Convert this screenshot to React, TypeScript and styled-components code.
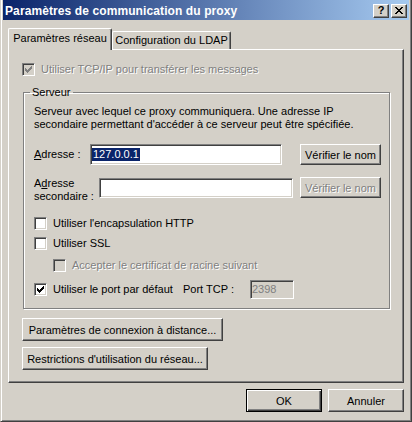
import styled, { createGlobalStyle } from 'styled-components'

const GlobalStyle = createGlobalStyle`
  html, body {
    margin: 0;
    padding: 0;
    background: #d4d0c8;
    overflow: hidden;
  }
  body {
    font-family: "Liberation Sans", Arial, sans-serif;
    font-size: 11px;
    color: #000;
  }
`

const Window = styled.div`
  box-sizing: border-box;
  width: 412px;
  height: 422px;
  background: #d4d0c8;
  border-left: 1px solid #d4d0c8;
  border-right: 1px solid #404040;
  border-bottom: 1px solid #404040;
  box-shadow: inset 1px 0 #fff, inset -1px -1px #808080;
  padding: 0 2px 2px 2px;
  display: flex;
  flex-direction: column;
`

const TitleBar = styled.div`
  height: 20px;
  display: flex;
  align-items: center;
  background: linear-gradient(to right, #0a246a, #a6caf0);
  padding: 1px 2px 0 2px;
  box-sizing: border-box;
`

const Title = styled.span`
  flex: 1;
  color: #fff;
  font-weight: bold;
  font-size: 12px;
  letter-spacing: 0.1px;
  white-space: nowrap;
`

const CaptionButton = styled.div`
  box-sizing: border-box;
  width: 16px;
  height: 14px;
  margin-left: 2px;
  background: #d4d0c8;
  border: 1px solid;
  border-color: #fff #404040 #404040 #fff;
  box-shadow: inset -1px -1px #808080;
  display: flex;
  align-items: center;
  justify-content: center;
  font-weight: bold;
  font-size: 11px;
  line-height: 11px;
`

const Body = styled.div`
  padding: 8px 5px 0 5px;
  display: flex;
  flex-direction: column;
`

const TabStrip = styled.div`
  display: flex;
  align-items: flex-end;
  height: 21px;
`

const Tab = styled.div<{ $active?: boolean; $w: number }>`
  box-sizing: border-box;
  width: ${p => p.$w}px;
  height: ${p => (p.$active ? 22 : 18)}px;
  margin-bottom: ${p => (p.$active ? -1 : 0)}px;
  position: relative;
  z-index: ${p => (p.$active ? 1 : 0)};
  background: #d4d0c8;
  border-top: 1px solid #fff;
  border-left: 1px solid #fff;
  border-right: 1px solid #404040;
  border-top-left-radius: 2px;
  border-top-right-radius: 2px;
  box-shadow: inset -1px 0 #808080;
  display: flex;
  justify-content: center;
  padding-top: ${p => (p.$active ? 3 : 2)}px;
  line-height: 13px;
`

const Panel = styled.div`
  box-sizing: border-box;
  height: 334px;
  border-top: 1px solid #fff;
  border-left: 1px solid #fff;
  border-right: 1px solid #404040;
  border-bottom: 1px solid #404040;
  box-shadow: inset -1px -1px #808080;
  padding: 13px 13px 0 13px;
  display: flex;
  flex-direction: column;
`

const Group = styled.fieldset`
  margin: 10px 0 0 1px;
  width: 367px;
  box-sizing: border-box;
  border: 1px solid #808080;
  box-shadow: 1px 1px #fff, inset 1px 1px #fff;
  padding: 6px 8px 9px 10px;
  min-width: 0;
  display: flex;
  flex-direction: column;
`

const Legend = styled.legend`
  padding: 0 2px;
  margin-left: -4px;
  line-height: 13px;
`

const Text = styled.div`
  line-height: 13px;
  white-space: nowrap;
`

const Row = styled.div<{ $mt: number; $align?: string }>`
  display: flex;
  align-items: ${p => p.$align || 'center'};
  margin-top: ${p => p.$mt}px;
`

const Label = styled.div<{ $w: number }>`
  width: ${p => p.$w}px;
  flex: none;
  line-height: 13px;
`

const Field = styled.div<{ $w: number; $h?: number; $disabled?: boolean; $mt?: number }>`
  box-sizing: border-box;
  width: ${p => p.$w}px;
  height: ${p => p.$h || 21}px;
  margin-top: ${p => p.$mt || 0}px;
  flex: none;
  background: ${p => (p.$disabled ? '#d4d0c8' : '#fff')};
  color: ${p => (p.$disabled ? '#808080' : '#000')};
  border: 1px solid;
  border-color: #808080 #fff #fff #808080;
  box-shadow: inset 1px 1px #404040, inset -1px -1px #d4d0c8;
  padding: 0 1px;
  display: flex;
  align-items: center;
  line-height: 13px;
`

const Selected = styled.span`
  background: #0a246a;
  color: #fff;
  padding: 0 1px 0 1px;
`

const Button = styled.button<{ $w: number; $h?: number; $mt?: number; $default?: boolean }>`
  box-sizing: border-box;
  width: ${p => p.$w}px;
  height: ${p => p.$h || 23}px;
  margin-top: ${p => p.$mt || 0}px;
  flex: none;
  padding: 0;
  font-family: "Liberation Sans", Arial, sans-serif;
  font-size: 11px;
  color: #000;
  background: #d4d0c8;
  border: 1px solid;
  border-color: ${p => (p.$default ? '#000' : '#fff #404040 #404040 #fff')};
  box-shadow: ${p =>
    p.$default
      ? 'inset 1px 1px #fff, inset -1px -1px #404040, inset -2px -2px #808080'
      : 'inset -1px -1px #808080'};
  &:disabled {
    color: #808080;
    text-shadow: 1px 1px #fff;
  }
`

const CheckRow = styled.div<{ $mt: number; $indent?: number; $w?: number; $disabled?: boolean }>`
  display: flex;
  align-items: center;
  gap: 6px;
  margin-top: ${p => p.$mt}px;
  margin-left: ${p => p.$indent || 0}px;
  width: ${p => (p.$w ? `${p.$w}px` : 'auto')};
  flex: none;
  line-height: 13px;
  white-space: nowrap;
  color: ${p => (p.$disabled ? '#808080' : '#000')};
  text-shadow: ${p => (p.$disabled ? '1px 1px #fff' : 'none')};
`

const Box = styled.span<{ $disabled?: boolean }>`
  box-sizing: border-box;
  width: 13px;
  height: 13px;
  flex: none;
  background: ${p => (p.$disabled ? '#d4d0c8' : '#fff')};
  border: 1px solid;
  border-color: #808080 #fff #fff #808080;
  box-shadow: inset 1px 1px #404040, inset -1px -1px #d4d0c8;
  display: flex;
  align-items: center;
  justify-content: center;
`

const BottomBar = styled.div`
  display: flex;
  justify-content: flex-end;
  gap: 6px;
  margin-top: 6px;
`

const U = styled.span`
  text-decoration: underline;
`

const Check = ({ color }: { color: string }) => (
  <svg width="7" height="7" viewBox="0 0 7 7" style={{ display: 'block' }}>
    <path
      fill={color}
      d="M0 2h1v3H0z M1 3h1v3H1z M2 4h1v3H2z M3 3h1v3H3z M4 2h1v3H4z M5 1h1v3H5z M6 0h1v3H6z"
    />
  </svg>
)

type CheckboxProps = {
  label: string
  checked?: boolean
  disabled?: boolean
  mt: number
  indent?: number
  w?: number
}

const Checkbox = ({ label, checked, disabled, mt, indent, w }: CheckboxProps) => (
  <CheckRow $mt={mt} $indent={indent} $w={w} $disabled={disabled}>
    <Box $disabled={disabled}>{checked && <Check color={disabled ? '#808080' : '#000'} />}</Box>
    <span>{label}</span>
  </CheckRow>
)

const CloseGlyph = () => (
  <svg width="8" height="7" viewBox="0 0 8 7" style={{ display: 'block' }}>
    <path
      fill="#000"
      d="M0 0h2v1H0z M6 0h2v1H6z M1 1h2v1H1z M5 1h2v1H5z M2 2h4v1H2z M3 3h2v1H3z M2 4h4v1H2z M1 5h2v1H1z M5 5h2v1H5z M0 6h2v1H0z M6 6h2v1H6z"
    />
  </svg>
)

const App = () => {
  return (
    <>
      <GlobalStyle />
      <Window>
        <TitleBar>
          <Title>Paramètres de communication du proxy</Title>
          <CaptionButton>?</CaptionButton>
          <CaptionButton>
            <CloseGlyph />
          </CaptionButton>
        </TitleBar>
        <Body>
          <TabStrip>
            <Tab $active $w={104}>Paramètres réseau</Tab>
            <Tab $w={119}>Configuration du LDAP</Tab>
          </TabStrip>
          <Panel>
            <Checkbox label="Utiliser TCP/IP pour transférer les messages" checked disabled mt={0} />
            <Group>
              <Legend>Serveur</Legend>
              <Text>
                Serveur avec lequel ce proxy communiquera. Une adresse IP
                <br />
                secondaire permettant d'accéder à ce serveur peut être spécifiée.
              </Text>
              <Row $mt={13}>
                <Label $w={56}>
                  <U>A</U>dresse :
                </Label>
                <Field $w={192}>
                  <Selected>127.0.0.1</Selected>
                </Field>
                <Button $w={81} $h={21} style={{ marginLeft: 'auto' }}>
                  Vérifier le nom
                </Button>
              </Row>
              <Row $mt={12} $align="flex-start">
                <Label $w={65}>
                  A<U>d</U>resse
                  <br />
                  secondaire :
                </Label>
                <Field $w={194} $h={20} $mt={1} />
                <Button $w={81} $h={21} disabled style={{ marginLeft: 'auto' }}>
                  Vérifier le nom
                </Button>
              </Row>
              <Checkbox label="Utiliser l'encapsulation HTTP" mt={14} />
              <Checkbox label="Utiliser SSL" mt={7} />
              <Checkbox label="Accepter le certificat de racine suivant" disabled indent={19} mt={9} />
              <Row $mt={8}>
                <Checkbox label="Utiliser le port par défaut" checked mt={0} w={149} />
                <Label $w={67}>Port TCP :</Label>
                <Field $w={44} $h={19} $disabled>
                  2398
                </Field>
              </Row>
            </Group>
            <Button $w={201} $mt={9}>
              Paramètres de connexion à distance...
            </Button>
            <Button $w={186} $mt={6}>
              Restrictions d'utilisation du réseau...
            </Button>
          </Panel>
          <BottomBar>
            <Button $w={76} $default>
              OK
            </Button>
            <Button $w={76}>Annuler</Button>
          </BottomBar>
        </Body>
      </Window>
    </>
  )
}

export default App
